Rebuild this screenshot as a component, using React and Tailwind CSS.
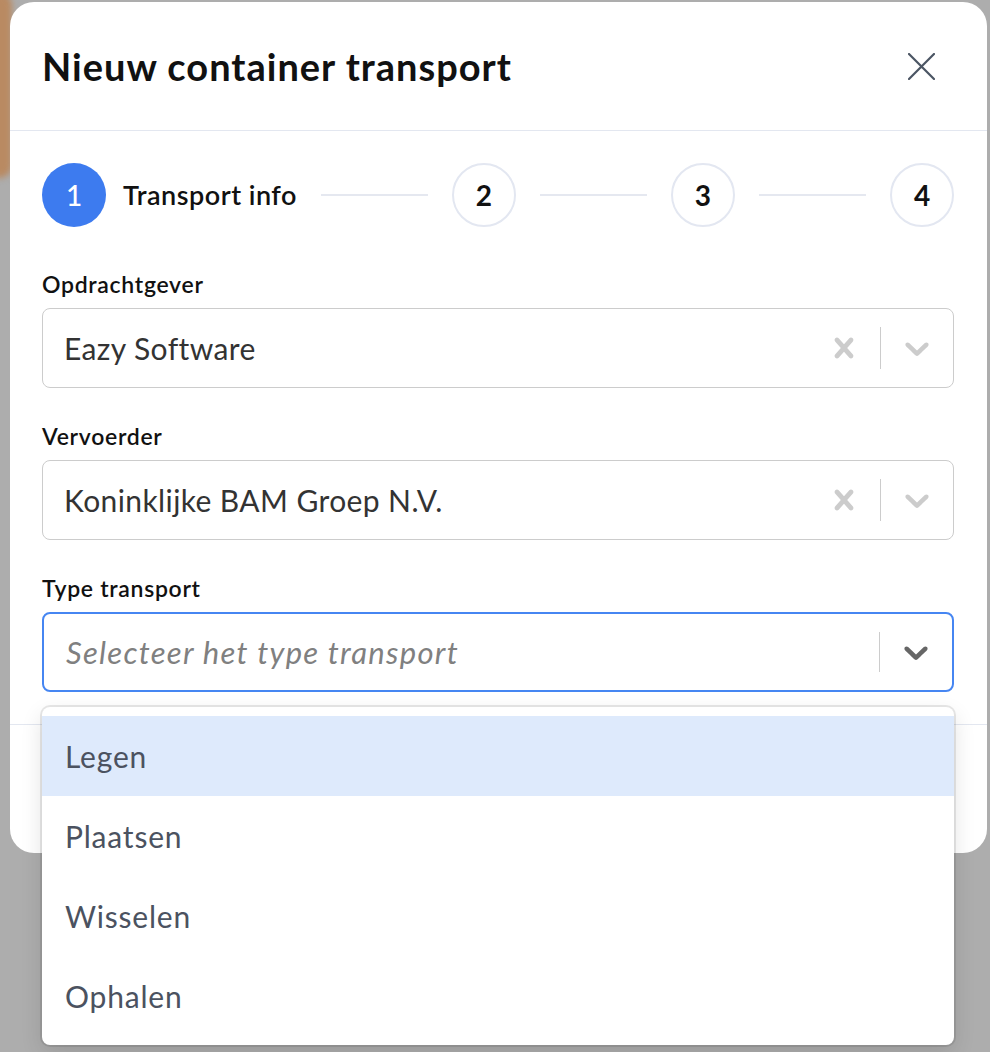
import React from "react";

const FONT = { fontFamily: "Lato, 'Noto Sans', sans-serif" };

function CrossIcon({ className }) {
  return (
    <svg viewBox="0 0 20 20" width="40" height="40" className={className} fill="currentColor">
      <path d="M14.348 14.849c-0.469 0.469-1.229 0.469-1.697 0l-2.651-3.030-2.651 3.029c-0.469 0.469-1.229 0.469-1.697 0-0.469-0.469-0.469-1.229 0-1.697l2.758-3.15-2.759-3.152c-0.469-0.469-0.469-1.228 0-1.697s1.228-0.469 1.697 0l2.652 3.031 2.651-3.031c0.469-0.469 1.228-0.469 1.697 0s0.469 1.229 0 1.697l-2.758 3.152 2.758 3.15c0.469 0.469 0.469 1.229 0 1.698z" />
    </svg>
  );
}

function ChevronIcon({ className }) {
  return (
    <svg viewBox="0 0 20 20" width="40" height="40" className={className} fill="currentColor">
      <path d="M4.516 7.548c0.436-0.446 1.043-0.481 1.576 0l3.908 3.747 3.908-3.747c0.533-0.481 1.141-0.446 1.574 0 0.436 0.445 0.408 1.197 0 1.615-0.406 0.418-4.695 4.502-4.695 4.502-0.217 0.223-0.502 0.335-0.787 0.335s-0.57-0.112-0.789-0.335c0 0-4.287-4.084-4.695-4.502s-0.436-1.170 0-1.615z" />
    </svg>
  );
}

function SelectField({ label, value, placeholder, focused, clearable, children }) {
  return (
    <div className="relative">
      <div className="h-[28px] leading-[28px] text-[23px] tracking-[0.7px] font-semibold text-[#111] mb-[10px]">{label}</div>
      <div
        className={
          focused
            ? "h-[80px] rounded-[8px] border-2 border-[#4686f2] flex items-center bg-white"
            : "h-[80px] rounded-[8px] border border-[#cccccc] flex items-center bg-white"
        }
      >
        <div className={focused ? "flex-1 pl-[22px]" : "flex-1 pl-[21px]"}>
          {value ? (
            <span className="text-[#333333] text-[30px] tracking-[0.4px]">{value}</span>
          ) : (
            <span className="text-[#808080] italic text-[31px] tracking-[1.3px]">{placeholder}</span>
          )}
        </div>
        <div className="flex items-center self-stretch">
          {clearable && (
            <div className="px-[16px] text-[#cccccc]">
              <CrossIcon />
            </div>
          )}
          <div className="w-px bg-[#cccccc] self-stretch my-[18px]" />
          <div className={focused ? "px-[16px] text-[#666666]" : "px-[16px] text-[#cccccc]"}>
            <ChevronIcon />
          </div>
        </div>
      </div>
      {children}
    </div>
  );
}

export default function App() {
  const options = ["Legen", "Plaatsen", "Wisselen", "Ophalen"];
  return (
    <div className="relative w-[990px] h-[1052px] bg-[#adadad] overflow-hidden" style={FONT}>
      <div className="absolute left-[-14px] top-[-8px] w-[26px] h-[186px] bg-[#b98a62] rounded-full blur-[3px]" />
      <div className="relative pt-[2px] pl-[10px] pr-[3px]">
        <div className="bg-white rounded-[24px] h-[851px] flex flex-col">
          <div className="h-[129px] flex items-center justify-between pl-[32px] pr-[52px] border-b border-[#e3e7f0] shrink-0">
            <h1 className="text-[38px] font-bold text-[#111111] tracking-[1px]">Nieuw container transport</h1>
            <svg width="27" height="27" viewBox="0 0 27 27" className="text-[#4b5563]">
              <path d="M1 1L26 26M26 1L1 26" stroke="currentColor" strokeWidth="2.2" strokeLinecap="round" />
            </svg>
          </div>
          <div className="px-[32px] pr-[33px] pt-[32px] pb-[32px] border-b border-[#e3e7f0]">
            <div className="h-16 flex items-center gap-6 mb-[43px]">
              <div className="flex items-center gap-[17px]">
                <div className="w-16 h-16 rounded-full bg-[#3d7bef] text-white flex items-center justify-center text-[28px] font-medium">
                  1
                </div>
                <span className="text-[27px] font-semibold text-[#111] tracking-[0.5px]">Transport info</span>
              </div>
              <div className="flex-1 h-[2px] bg-[#e5e8f0]" />
              <div className="w-16 h-16 rounded-full border-2 border-[#e3e7f1] flex items-center justify-center text-[28px] font-bold text-[#111]">
                2
              </div>
              <div className="flex-1 h-[2px] bg-[#e5e8f0]" />
              <div className="w-16 h-16 rounded-full border-2 border-[#e3e7f1] flex items-center justify-center text-[28px] font-bold text-[#111]">
                3
              </div>
              <div className="flex-1 h-[2px] bg-[#e5e8f0]" />
              <div className="w-16 h-16 rounded-full border-2 border-[#e3e7f1] flex items-center justify-center text-[28px] font-bold text-[#111]">
                4
              </div>
            </div>
            <div className="flex flex-col gap-[34px]">
              <SelectField label="Opdrachtgever" value="Eazy Software" clearable />
              <SelectField label="Vervoerder" value="Koninklijke BAM Groep N.V." clearable />
              <SelectField label="Type transport" placeholder="Selecteer het type transport" focused>
                <div className="absolute left-0 right-0 top-full mt-[15px] z-10 bg-white rounded-[8px] py-[9px] shadow-[0_0_0_2px_rgba(0,0,0,0.09),0_8px_22px_rgba(0,0,0,0.12)]">
                  {options.map((o, i) => (
                    <div
                      key={o}
                      className={
                        i === 0
                          ? "h-[80px] flex items-center pl-[23px] text-[30px] tracking-[0.8px] text-[#4b5260] bg-[#deeafc]"
                          : "h-[80px] flex items-center pl-[23px] text-[30px] tracking-[0.8px] text-[#4b5260]"
                      }
                    >
                      {o}
                    </div>
                  ))}
                </div>
              </SelectField>
            </div>
          </div>
          <div className="flex-1" />
        </div>
      </div>
    </div>
  );
}
